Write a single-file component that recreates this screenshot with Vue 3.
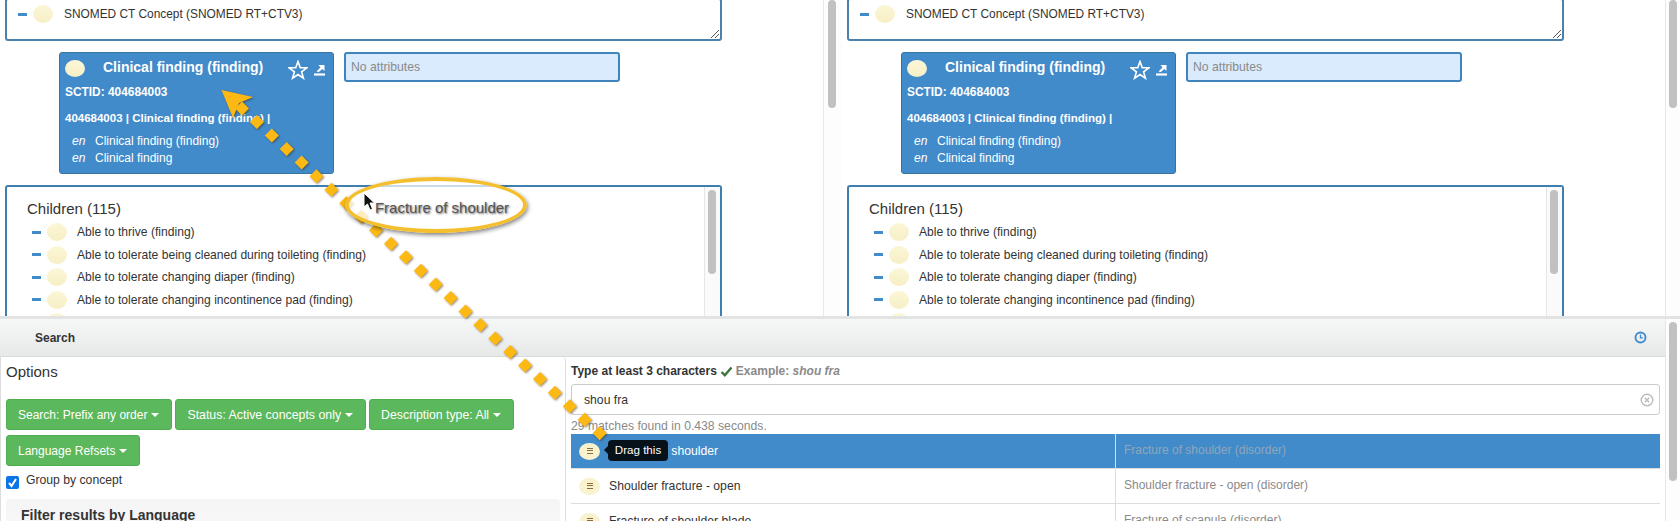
<script setup>
const children = [
  'Able to thrive (finding)',
  'Able to tolerate being cleaned during toileting (finding)',
  'Able to tolerate changing diaper (finding)',
  'Able to tolerate changing incontinence pad (finding)',
  'Able to tolerate dressing change (finding)'
]
const panes = [0, 1]
const buttons = ['Search: Prefix any order', 'Status: Active concepts only', 'Description type: All', 'Language Refsets']
const rows = [
  { term: 'Fracture of shoulder', fsn: 'Fracture of shoulder (disorder)', active: true },
  { term: 'Shoulder fracture - open', fsn: 'Shoulder fracture - open (disorder)' },
  { term: 'Fracture of shoulder blade', fsn: 'Fracture of scapula (disorder)' }
]
const diamonds = []
for (let i = 0; i <= 24; i++) {
  diamonds.push({ x: 242 + i * 14.9, y: 108.5 + i * 13.53 })
}
const diamondPoints = (d) =>
  `${d.x},${d.y - 7} ${d.x + 7},${d.y} ${d.x},${d.y + 7} ${d.x - 7},${d.y}`
</script>

<template>
  <div class="page">
    <div class="top">
      <section v-for="p in panes" :key="p" class="pane">
        <div class="pane-main">
          <div class="parents">
            <div class="tree-row first">
              <span class="minus"></span>
              <span class="ball"></span>
              <span class="tree-text">SNOMED CT Concept (SNOMED RT+CTV3)</span>
            </div>
            <svg class="grip" width="12" height="12" viewBox="0 0 12 12">
              <path d="M3 11 L11 3 M7 11 L11 7" stroke="#555" stroke-width="1" fill="none" />
            </svg>
          </div>

          <div class="concept-line">
            <div class="card">
              <div class="card-head">
                <span class="card-ball"></span>
                <span class="card-title">Clinical finding (finding)</span>
                <svg class="star" width="20" height="20" viewBox="0 0 20 20">
                  <path d="M10 1.5 L12.2 7.6 L18.8 7.8 L13.6 11.8 L15.4 18.2 L10 14.5 L4.6 18.2 L6.4 11.8 L1.2 7.8 L7.8 7.6 Z" fill="none" stroke="#fff" stroke-width="1.6" />
                </svg>
                <svg class="export" width="13" height="13" viewBox="0 0 13 13">
                  <path d="M1 11.5 H12" stroke="#fff" stroke-width="2.2" />
                  <path d="M3.5 8.5 L7.5 4.5 L5.5 2 H11.5 V8 L9.3 6 L5.8 9 Z" fill="#fff" />
                </svg>
              </div>
              <div class="sctid">SCTID: 404684003</div>
              <div class="fsn">404684003 | Clinical finding (finding) |</div>
              <div class="desc"><i>en</i><span>Clinical finding (finding)</span></div>
              <div class="desc"><i>en</i><span>Clinical finding</span></div>
            </div>
            <div class="attrs">No attributes</div>
          </div>

          <div class="children">
            <div class="children-list">
              <h4>Children (115)</h4>
              <div v-for="c in children" :key="c" class="tree-row child">
                <span class="minus"></span>
                <span class="ball"></span>
                <span class="tree-text">{{ c }}</span>
              </div>
            </div>
            <div class="inner-track"><div class="inner-thumb"></div></div>
          </div>
        </div>
        <div class="pane-track"><div class="pane-thumb"></div></div>
      </section>
    </div>

    <div class="split"></div>

    <div class="bottom">
      <div class="bottom-main">
        <header class="search-head">
          <b>Search</b>
          <svg width="13" height="13" viewBox="0 0 13 13">
            <circle cx="6.5" cy="6.5" r="5" fill="none" stroke="#428bca" stroke-width="1.9" />
            <path d="M6.5 3.5 V6.8 H9" fill="none" stroke="#428bca" stroke-width="1.3" />
          </svg>
        </header>
        <div class="search-body">
          <aside class="options">
            <h3>Options</h3>
            <div class="btns">
              <button v-for="b in buttons" :key="b" class="btn">{{ b }}<span class="caret"></span></button>
            </div>
            <label class="group"><span class="check"><svg width="13" height="13" viewBox="0 0 13 13"><path d="M3 7 L5.5 10 L10 3" stroke="#fff" stroke-width="2" fill="none" /></svg></span>Group by concept</label>
            <div class="filter">Filter results by Language</div>
          </aside>
          <div class="results">
            <div class="hint">
              <b>Type at least 3 characters</b>
              <svg width="13" height="11" viewBox="0 0 13 11"><path d="M1.5 6 L4.8 9.2 L11.5 1.5" fill="none" stroke="#3c763d" stroke-width="2.4" /></svg>
              <b class="muted">Example: <i>shou fra</i></b>
            </div>
            <div class="input">
              <span>shou fra</span>
              <svg width="14" height="14" viewBox="0 0 14 14">
                <circle cx="7" cy="7" r="5.8" fill="none" stroke="#bbb" stroke-width="1.4" />
                <path d="M4.8 4.8 L9.2 9.2 M9.2 4.8 L4.8 9.2" stroke="#bbb" stroke-width="1.4" />
              </svg>
            </div>
            <div class="count">29 matches found in 0.438 seconds.</div>
            <div v-for="r in rows" :key="r.term" class="row" :class="{ active: r.active }">
              <div class="cell-term">
                <span class="pill"><span class="bars"></span></span>
                <span>{{ r.term }}</span>
              </div>
              <div class="cell-fsn">{{ r.fsn }}</div>
            </div>
          </div>
        </div>
      </div>
      <div class="page-track"><div class="page-thumb"></div></div>
    </div>

    <svg class="arrow" width="1680" height="521" viewBox="0 0 1680 521">
      <g class="arrow-g">
        <polygon v-for="(d, i) in diamonds" :key="i" :points="diamondPoints(d)" fill="#fdb913" />
        <polygon points="221.5,90 253,97 239,103 233,118" fill="#fdb913" />
      </g>
    </svg>

    <div class="callout"><span>Fracture of shoulder</span></div>

    <svg class="cursor" width="14" height="20" viewBox="0 0 14 20">
      <path d="M1 1 L1 15 L4.5 12 L7 18 L9.5 17 L7 11 L11.5 11 Z" fill="#111" stroke="#fff" stroke-width="1" />
    </svg>

    <div class="tip">Drag this</div>
  </div>
</template>

<style>
html, body { margin: 0; overflow: hidden; background: #fff; }
</style>

<style scoped>
.page {
  position: relative;
  width: 1680px;
  height: 521px;
  overflow: hidden;
  font-family: "Liberation Sans", Arial, sans-serif;
  font-size: 12px;
  color: #333;
  background: #fff;
}
.top { display: flex; height: 316px; overflow: hidden; }
.pane { display: flex; width: 842px; height: 316px; overflow: hidden; flex: none; }
.pane + .pane { width: 838px; }
.pane-main { width: 823px; padding-left: 5px; box-sizing: border-box; flex: none; }
.parents {
  position: relative;
  box-sizing: border-box;
  width: 717px;
  height: 43px;
  margin-top: -2px;
  border: 2px solid #4a82ad;
  border-radius: 3px;
  background: #fff;
}
.grip { position: absolute; right: 0; bottom: 0; }
.tree-row { display: flex; align-items: center; }
.tree-row.first { padding: 5px 0 0 11px; }
.minus { width: 9px; height: 3px; background: #428bca; flex: none; }
.ball {
  width: 20px;
  height: 18px;
  margin-left: 6px;
  border-radius: 50%;
  background: linear-gradient(#fbf6d6, #f6efc6);
  flex: none;
}
.tree-text { margin-left: 10px; font-size: 12.1px; color: #333; white-space: nowrap; }
.first .tree-text { margin-left: 11px; font-size: 11.9px; }
.concept-line { display: flex; align-items: flex-start; gap: 10px; margin: 11px 0 11px 54px; }
.card {
  box-sizing: border-box;
  width: 275px;
  height: 122px;
  padding: 3px 5px;
  border: 1px solid #37749f;
  border-radius: 3px;
  background: #428bca;
  color: #fff;
}
.card-head { display: flex; align-items: center; height: 22px; }
.card-ball {
  width: 20px;
  height: 17px;
  margin-top: 3px;
  border-radius: 50%;
  background: linear-gradient(#fbf6d6, #f6efc6);
  flex: none;
}
.card-title { margin-left: 18px; width: 185px; font-size: 14px; font-weight: bold; white-space: nowrap; flex: none; }
.star { margin-top: 5px; flex: none; }
.export { margin: 4px 0 0 5px; flex: none; }
.sctid { margin-top: 7px; font-size: 11.9px; font-weight: bold; }
.fsn { margin-top: 13px; font-size: 11.5px; font-weight: bold; white-space: nowrap; }
.desc { display: flex; margin-top: 3px; line-height: 14px; font-size: 12px; padding-left: 7px; }
.fsn + .desc { margin-top: 10px; }
.desc i { width: 23px; }
.attrs {
  box-sizing: border-box;
  width: 276px;
  height: 30px;
  padding: 6px 5px;
  border: 2px solid #3f84bd;
  border-radius: 3px;
  background: #d9ebfd;
  color: #8a8a8a;
  font-size: 12.2px;
}
.children {
  display: flex;
  box-sizing: border-box;
  width: 717px;
  height: 140px;
  border: 2px solid #3f7fb0;
  border-radius: 3px;
  background: #fff;
}
.children-list { flex: 1; padding-left: 20px; overflow: hidden; }
.children-list h4 { margin: 13px 0 4px; font-size: 15px; font-weight: normal; line-height: 17px; color: #333; }
.tree-row.child { height: 22.5px; padding-left: 5px; }
.inner-track { width: 15px; border-left: 1px solid #e6e6e6; background: #fafafa; flex: none; }
.inner-thumb { width: 8px; height: 84px; margin: 3px 0 0 3px; border-radius: 4px; background: #c1c1c1; }
.pane-track { width: 19px; border-left: 1px solid #e8e8e8; background: #fdfdfd; box-sizing: border-box; flex: none; }
.pane + .pane .pane-track { width: 15px; }
.pane-thumb { width: 8px; height: 108px; margin-left: 4px; border-radius: 4px; background: #c1c1c1; }
.pane + .pane .pane-thumb { margin-left: 3px; }
.split { height: 3px; background: #e2e4e4; }
.bottom { display: flex; height: 202px; }
.bottom-main { width: 1665px; flex: none; }
.search-head {
  display: flex;
  align-items: center;
  justify-content: space-between;
  box-sizing: border-box;
  height: 38px;
  padding: 0 18px 0 35px;
  border-bottom: 1px solid #d9dbdb;
  background: linear-gradient(#f6f7f7, #e7e9e9);
}
.search-body { display: flex; }
.options {
  box-sizing: border-box;
  width: 566px;
  height: 170px;
  padding: 0 5px 0 5px;
  border-left: 1px solid #ddd;
  border-right: 1px solid #ddd;
  border-top-right-radius: 4px;
  flex: none;
}
.options h3 { margin: 6px 0 0; font-size: 15px; font-weight: normal; line-height: 17px; }
.btns { display: flex; flex-wrap: wrap; gap: 5px 3px; margin-top: 19px; width: 540px; }
.btn {
  box-sizing: border-box;
  height: 31px;
  padding: 0 12px 0 11px;
  border: 1px solid #4cae4c;
  border-radius: 3px;
  background: #5cb85c;
  color: #fff;
  font: 12px "Liberation Sans", Arial, sans-serif;
  white-space: nowrap;
}
.btn:nth-child(2) { font-size: 12.35px; }
.btn:nth-child(3) { font-size: 12.3px; }
.caret {
  display: inline-block;
  margin-left: 4px;
  vertical-align: middle;
  border-top: 4px solid #fff;
  border-left: 4px solid transparent;
  border-right: 4px solid transparent;
}
.group { display: flex; align-items: flex-start; gap: 7px; margin-top: 7px; font-size: 12.2px; line-height: 14px; }
.check {
  display: block;
  width: 13px;
  height: 13px;
  margin-top: 3px;
  border-radius: 2px;
  background: #0a75e6;
}
.filter {
  height: 40px;
  margin-top: 10px;
  padding: 8px 15px;
  border-radius: 3px;
  background: linear-gradient(#f5f5f5, #fafafa);
  font-size: 14px;
  font-weight: bold;
}
.results { width: 1089px; margin-left: 5px; flex: none; }
.hint { display: flex; align-items: center; gap: 3px; height: 14px; margin-top: 7px; }
.muted { color: #8a8a8a; }
.input {
  display: flex;
  align-items: center;
  justify-content: space-between;
  box-sizing: border-box;
  height: 31px;
  margin-top: 6px;
  padding: 0 5px 0 12px;
  border: 1px solid #ccc;
  border-radius: 3px;
  font-size: 12.2px;
}
.count { margin-top: 4px; height: 15px; line-height: 15px; color: #8a8a8a; font-size: 12.2px; }
.row { display: flex; height: 35px; border-bottom: 1px solid #ddd; box-sizing: border-box; font-size: 12.2px; }
.row.active { background: #428bca; color: #fff; }
.cell-term { display: flex; align-items: center; gap: 9px; width: 544px; padding-left: 8px; box-sizing: border-box; }
.cell-fsn { flex: 1; padding: 9px 8px; border-left: 1px solid #ddd; color: #8a8a8a; font-size: 12px; }
.row.active .cell-fsn { color: #8fa6ba; }
.pill {
  display: flex;
  align-items: center;
  justify-content: center;
  width: 21px;
  height: 17px;
  border-radius: 50%;
  background: #f8f2cf;
}
.bars {
  width: 6px;
  height: 6px;
  background: repeating-linear-gradient(#8a6d3b 0 1px, transparent 1px 2.5px);
}
.page-track { flex: 1; background: #fdfdfd; border-left: 1px solid #e8e8e8; }
.page-thumb { width: 8px; height: 159px; margin: 3px 0 0 3px; border-radius: 4px; background: #c1c1c1; }
.arrow { position: absolute; left: 0; top: 0; pointer-events: none; }
.arrow-g { filter: drop-shadow(1px 1.5px 1px rgba(60, 40, 0, 0.55)); }
.callout {
  position: absolute;
  left: 345px;
  top: 177px;
  box-sizing: border-box;
  width: 182px;
  height: 56px;
  padding-top: 4px;
  border: 4px solid #f4bf2f;
  border-radius: 50%;
  background: rgba(255, 255, 255, 0.72);
  box-shadow: 1px 2px 4px rgba(0, 0, 0, 0.5);
  display: flex;
  align-items: center;
  justify-content: center;
  font-size: 15px;
  color: #555;
  text-shadow: 1px 1px 2px rgba(0, 0, 0, 0.6);
}
.callout span { padding-left: 12px; white-space: nowrap; }
.cursor { position: absolute; left: 363px; top: 192px; }
.tip {
  position: absolute;
  left: 608px;
  top: 440px;
  box-sizing: border-box;
  width: 60px;
  height: 21px;
  border-radius: 4px;
  background: #07111a;
  color: #fff;
  font-size: 11.6px;
  line-height: 20px;
  text-align: center;
}
.tip::before {
  content: "";
  position: absolute;
  left: -4px;
  top: 6px;
  border-top: 4px solid transparent;
  border-bottom: 4px solid transparent;
  border-right: 4px solid #07111a;
}
</style>
